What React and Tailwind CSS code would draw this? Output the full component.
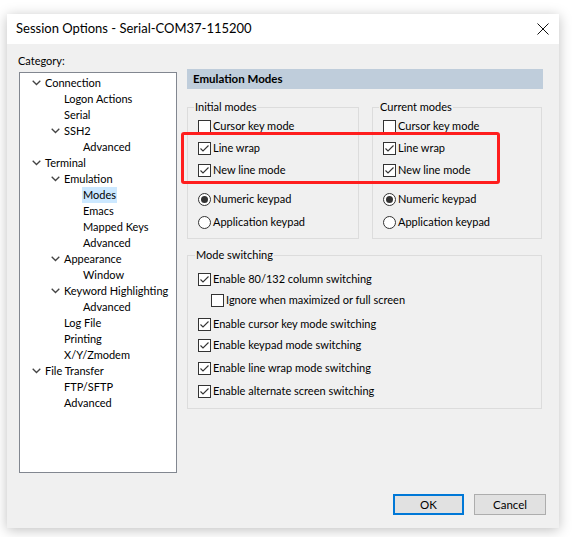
import React from 'react';

const font = { fontFamily: 'Lato, "Noto Sans", sans-serif' };

function Chevron() {
  return (
    <svg width="9" height="6" viewBox="0 0 9 6" className="shrink-0">
      <path d="M0.7 0.7 L4.5 4.5 L8.3 0.7" fill="none" stroke="#444" strokeWidth="1.3" />
    </svg>
  );
}

const tree = [
  ['Connection', 0, true],
  ['Logon Actions', 1],
  ['Serial', 1],
  ['SSH2', 1, true],
  ['Advanced', 2],
  ['Terminal', 0, true],
  ['Emulation', 1, true],
  ['Modes', 2, false, true],
  ['Emacs', 2],
  ['Mapped Keys', 2],
  ['Advanced', 2],
  ['Appearance', 1, true],
  ['Window', 2],
  ['Keyword Highlighting', 1, true],
  ['Advanced', 2],
  ['Log File', 1],
  ['Printing', 1],
  ['X/Y/Zmodem', 1],
  ['File Transfer', 0, true],
  ['FTP/SFTP', 1],
  ['Advanced', 1],
];

const indent = ['pl-[12px]', 'pl-[31px]', 'pl-[50px]'];

function TreeRow({ label, level, open, selected }) {
  return (
    <div className={`flex items-center h-4 whitespace-nowrap ${indent[level]}`}>
      <span className="w-[12px] flex items-center">{open && <Chevron />}</span>
      <span className={`px-[1px] leading-4 ${selected ? 'bg-[#cce8ff]' : ''}`}>{label}</span>
    </div>
  );
}

function Check({ checked }) {
  return (
    <span className="w-[13px] h-[13px] border border-[#333] bg-white flex items-center justify-center shrink-0">
      {checked && (
        <svg width="11" height="11" viewBox="0 0 11 11">
          <path d="M1.5 5.5 L4 8 L9.5 2.5" fill="none" stroke="#333" strokeWidth="1.1" />
        </svg>
      )}
    </span>
  );
}

function Radio({ checked }) {
  return (
    <span className="w-[13px] h-[13px] rounded-full border border-[#333] bg-white flex items-center justify-center shrink-0">
      {checked && <span className="w-[7px] h-[7px] rounded-full bg-[#333]" />}
    </span>
  );
}

function Item({ children, control, className = '' }) {
  return (
    <div className={`flex items-center gap-[2px] h-4 whitespace-nowrap ${className}`}>
      {control}
      <span className="leading-4">{children}</span>
    </div>
  );
}

function Modes({ title, w }) {
  return (
    <fieldset className={`border border-[#dcdcdc] ${w} h-[140px] pl-[10px] pt-[3px]`}>
      <legend className="px-[1px] -ml-[4px] leading-4">{title}</legend>
      <Item control={<Check />}>Cursor key mode</Item>
      <Item control={<Check checked />} className="mt-[6px]">Line wrap</Item>
      <Item control={<Check checked />} className="mt-[6px]">New line mode</Item>
      <Item control={<Radio checked />} className="mt-[13px]">Numeric keypad</Item>
      <Item control={<Radio />} className="mt-[7px]">Application keypad</Item>
    </fieldset>
  );
}

export default function App() {
  return (
    <div className="w-[572px] h-[537px] bg-white pt-[14px] pl-[7px] text-[11px] text-black" style={font}>
      <div className="w-[552px] h-[514px] flex flex-col bg-[#f0f0f0] shadow-[0_2px_12px_rgba(0,0,0,0.25)]">
        <div className="h-[30px] bg-white flex items-center justify-between pl-[9px] pr-[10px] shrink-0">
          <span className="text-[13px]">Session Options - Serial-COM37-115200</span>
          <svg width="12" height="12" viewBox="0 0 12 12">
            <path d="M0.5 0.5 L11.5 11.5 M11.5 0.5 L0.5 11.5" stroke="#111" strokeWidth="1" />
          </svg>
        </div>
        <div className="flex flex-1 relative">
          <div className="w-[173px] pl-[11px] pt-[9px] shrink-0">
            <div className="leading-4">Category:</div>
            <div className="mt-[3px] ml-[1px] w-[158px] h-[401px] bg-white border border-[#828790] pt-[2px]">
              {tree.map(([label, level, open, selected], i) => (
                <TreeRow key={i} label={label} level={level} open={open} selected={selected} />
              ))}
            </div>
          </div>
          <div className="pt-[25px] pl-[7px] w-[363px] shrink-0">
            <div className="h-5 bg-[#bfcddb] flex items-center pl-[6px] font-bold text-[11.5px]">Emulation Modes</div>
            <div className="flex gap-[13px] mt-[10px]">
              <Modes title="Initial modes" w="w-[172px]" />
              <Modes title="Current modes" w="w-[170px]" />
            </div>
            <fieldset className="mt-[8px] border border-[#dcdcdc] w-[355px] h-[162px] pl-[10px] pt-[8px]">
              <legend className="px-[1px] -ml-[3px] leading-4">Mode switching</legend>
              <Item control={<Check checked />}>Enable 80/132 column switching</Item>
              <Item control={<Check />} className="ml-[13px] mt-[5px]">Ignore when maximized or full screen</Item>
              <Item control={<Check checked />} className="mt-[8px]">Enable cursor key mode switching</Item>
              <Item control={<Check checked />} className="mt-[5px]">Enable keypad mode switching</Item>
              <Item control={<Check checked />} className="mt-[7px]">Enable line wrap mode switching</Item>
              <Item control={<Check checked />} className="mt-[7px]">Enable alternate screen switching</Item>
            </fieldset>
          </div>
          <div className="absolute left-[174px] top-[88px] w-[319px] h-[52px] border-[3px] border-[#ff1e1e] rounded-[3px] pointer-events-none" />
        </div>
        <div className="flex justify-end gap-[10px] pr-[13px] pb-[13px] -mt-[40px] relative">
          <button className="w-[71px] h-[21px] border-2 border-[#0078d7] bg-[#e1e1e1] leading-4 text-[11.5px]">OK</button>
          <button className="w-[72px] h-[21px] border border-[#adadad] bg-[#e1e1e1] leading-4 text-[11.5px]">Cancel</button>
        </div>
      </div>
    </div>
  );
}
